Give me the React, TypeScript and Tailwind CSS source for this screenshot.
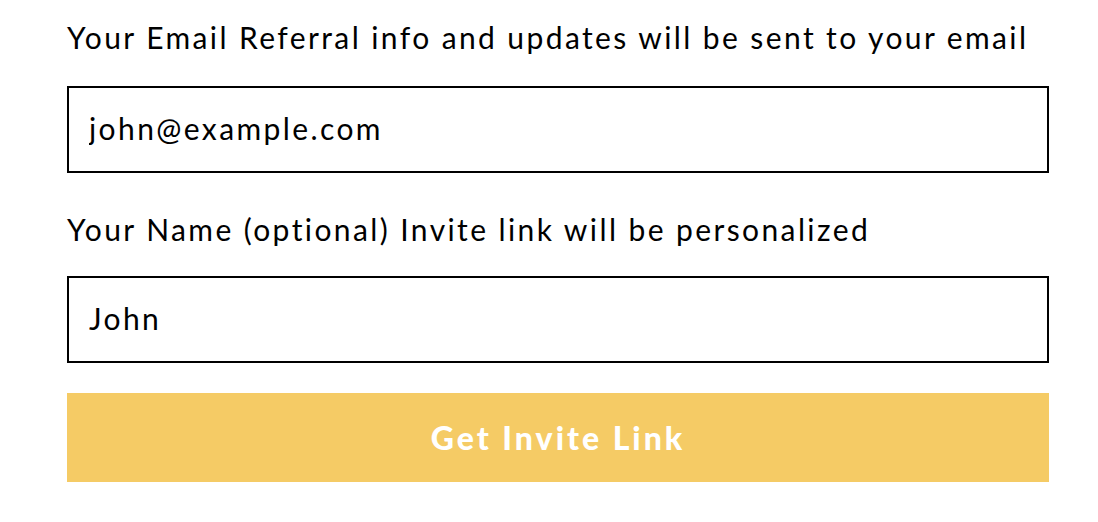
import React, { useState } from "react";

export default function App() {
  const [email, setEmail] = useState("john@example.com");
  const [name, setName] = useState("John");

  return (
    <div className="min-h-screen bg-white font-[Lato,sans-serif]">
      <div className="ml-[67px] w-[982px] pt-[17px] flex flex-col">
        <label className="text-[30px] leading-[40px] tracking-[2.4px] text-black whitespace-nowrap">
          Your Email Referral info and updates will be sent to your email
        </label>
        <input
          value={email}
          onChange={(e) => setEmail(e.target.value)}
          className="mt-[29px] h-[87px] w-full border-2 border-black px-[20px] pb-[3px] text-[30px] tracking-[2.4px] text-black outline-none"
        />
        <label className="mt-[36px] text-[30px] leading-[40px] tracking-[2.4px] text-black whitespace-nowrap">
          Your Name (optional) Invite link will be personalized
        </label>
        <input
          value={name}
          onChange={(e) => setName(e.target.value)}
          className="mt-[27px] h-[87px] w-full border-2 border-black px-[20px] pb-[3px] text-[30px] tracking-[2.4px] text-black outline-none"
        />
        <button className="mt-[30px] h-[89px] w-full bg-[#f5cb65] text-[32px] font-black tracking-[3px] text-white">
          Get Invite Link
        </button>
      </div>
    </div>
  );
}
